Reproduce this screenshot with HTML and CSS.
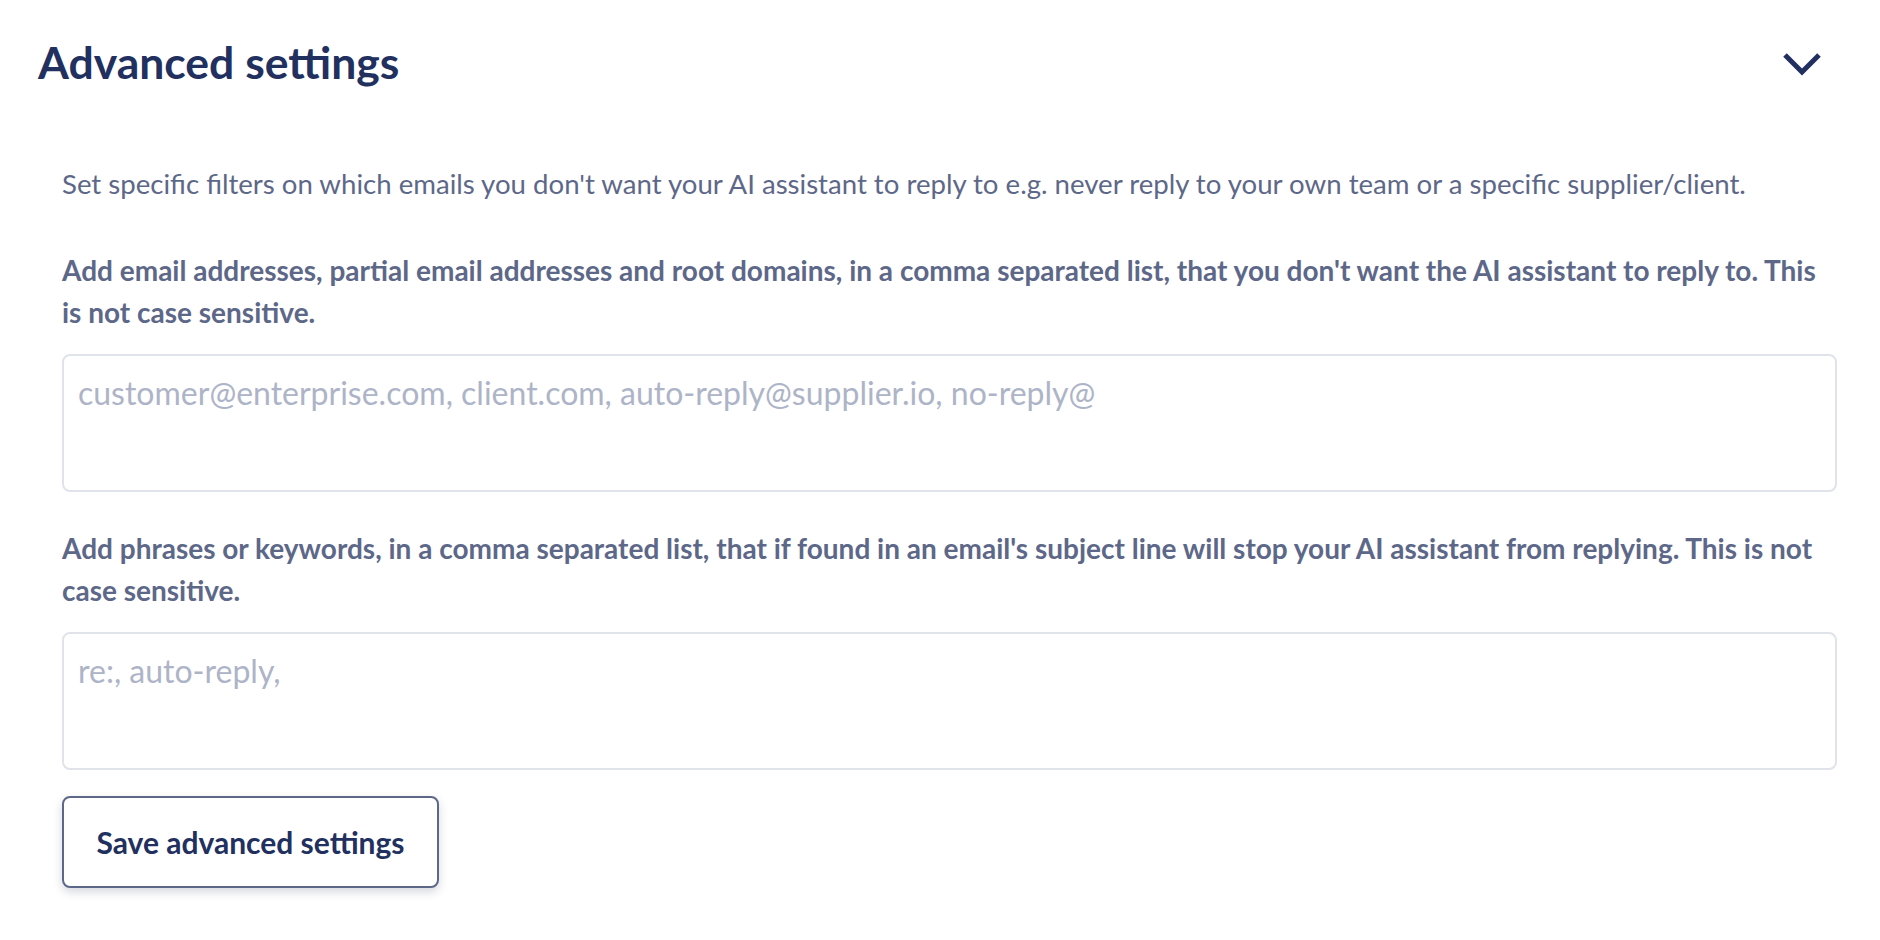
FILE: index.html
```html
<!DOCTYPE html>
<html lang="en">
<head>
<meta charset="utf-8">
<title>Advanced settings</title>
<link rel="stylesheet" href="styles.css">
</head>
<body>
<section class="panel">
  <header class="panel-header">
    <h2 class="panel-title">Advanced settings</h2>
    <button class="toggle" type="button" aria-label="Collapse">
      <svg width="40" height="26" viewBox="0 0 40 26" aria-hidden="true">
        <polyline points="3,4 20,21 37,4" fill="none" stroke="#21305e" stroke-width="5" stroke-linejoin="miter"/>
      </svg>
    </button>
  </header>
  <div class="panel-body">
    <p class="intro">Set specific filters on which emails you don't want your AI assistant to reply to e.g. never reply to your own team or a specific supplier/client.</p>
    <div class="field">
      <label class="field-label" for="emails">Add email addresses, partial email addresses and root domains, in a comma separated list, that you don't want the AI assistant to reply to. This is not case sensitive.</label>
      <textarea id="emails" class="field-input" placeholder="customer@enterprise.com, client.com, auto-reply@supplier.io, no-reply@"></textarea>
    </div>
    <div class="field">
      <label class="field-label" for="phrases">Add phrases or keywords, in a comma separated list, that if found in an email's subject line will stop your AI assistant from replying. This is not case sensitive.</label>
      <textarea id="phrases" class="field-input" placeholder="re:, auto-reply,"></textarea>
    </div>
    <div class="actions">
      <button class="save-btn" type="button">Save advanced settings</button>
    </div>
  </div>
</section>
</body>
</html>
```
FILE: styles.css
```css
* { box-sizing: border-box; }

html, body {
  margin: 0;
  padding: 0;
  background: #ffffff;
  font-family: Lato, "Noto Sans", "Liberation Sans", sans-serif;
}

.panel {
  width: 1880px;
  padding: 35px 43px 40px 38px;
}

.panel-header {
  display: flex;
  align-items: center;
  justify-content: space-between;
  height: 53px;
}

.panel-title {
  margin: 0;
  font-size: 44.5px;
  line-height: 53px;
  font-weight: 700;
  color: #21305e;
}

.toggle {
  display: flex;
  align-items: center;
  justify-content: center;
  margin: 4px 15px 0 0;
  padding: 0;
  border: 0;
  background: transparent;
  cursor: pointer;
}

.panel-body {
  display: flex;
  flex-direction: column;
  padding: 75px 0 0 24px;
}

.intro {
  margin: 0 0 44px;
  font-size: 27.6px;
  line-height: 42px;
  font-weight: 400;
  color: #5d6889;
}

.field {
  display: flex;
  flex-direction: column;
  gap: 21px;
  margin-bottom: 35px;
}

.field-label {
  font-size: 28px;
  line-height: 42px;
  font-weight: 700;
  color: #5d6889;
}

.field-input {
  display: block;
  width: 100%;
  height: 138px;
  padding: 15px 14px 10px;
  border: 2px solid #e0e3e9;
  border-radius: 8px;
  resize: none;
  font-family: Lato, "Noto Sans", "Liberation Sans", sans-serif;
  font-size: 32px;
  line-height: 44px;
  color: #21305e;
  background: #ffffff;
  outline: none;
}

.field-input::placeholder {
  color: #aeb4c7;
  opacity: 1;
}

.actions {
  display: flex;
  margin-top: -9px;
}

.save-btn {
  width: 377px;
  height: 92px;
  border: 2px solid #5d6889;
  border-radius: 8px;
  background: #ffffff;
  box-shadow: 0 4px 10px rgba(30, 40, 80, 0.18);
  font-family: Lato, "Noto Sans", "Liberation Sans", sans-serif;
  font-size: 30px;
  font-weight: 700;
  color: #21305e;
  cursor: pointer;
}
```
